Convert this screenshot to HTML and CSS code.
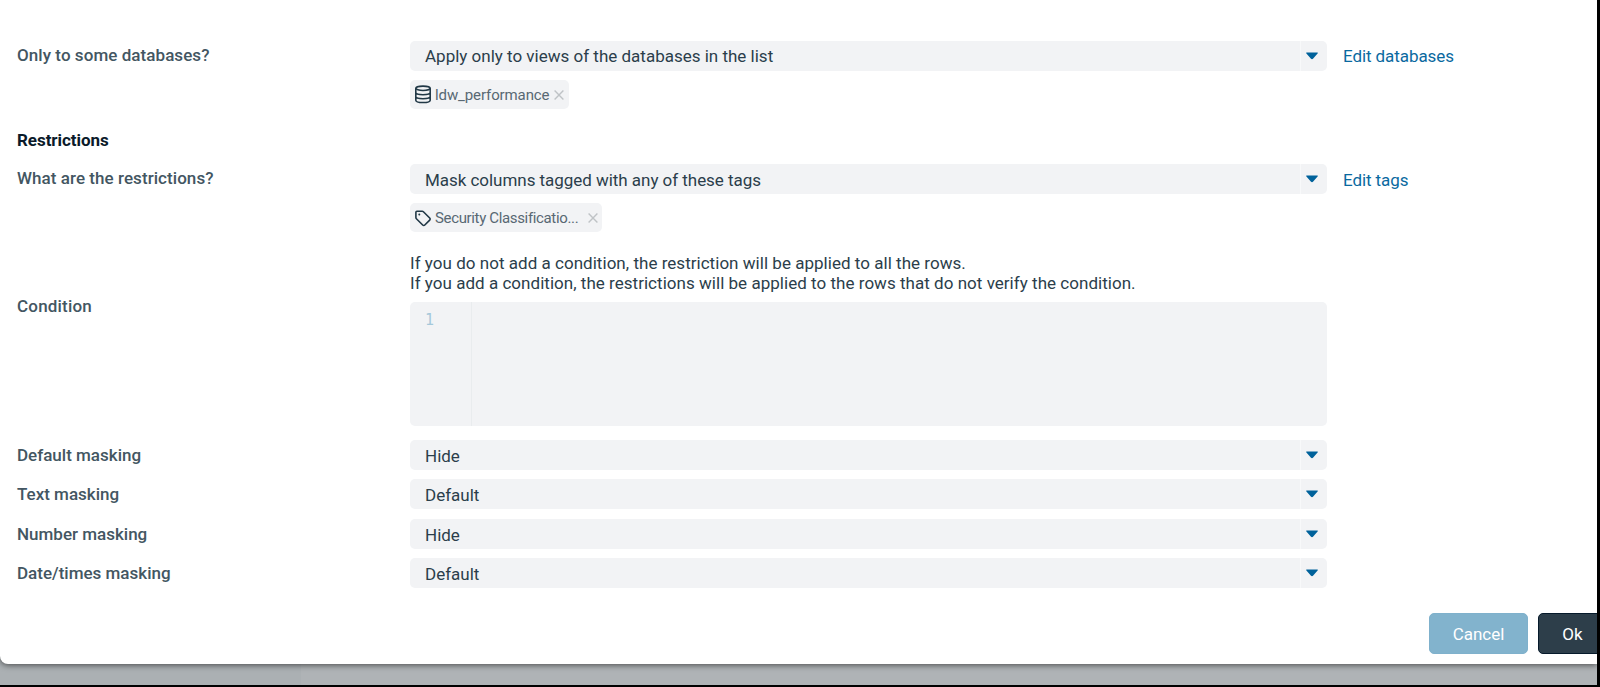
FILE: index.html
```html
<!DOCTYPE html>
<html lang="en">
<head>
  <meta charset="UTF-8" />
  <meta name="viewport" content="width=device-width, initial-scale=1.0"/>
  <title>Edit restriction</title>
  <link rel="stylesheet" href="styles.css">
</head>
<body>

  <div class="page">
    <div class="modal">
      <form class="form">

        <div class="row">
          <label class="label label-question">Only to some databases?</label>
          <div class="select"><span>Apply only to views of the databases in the list</span><i class="arrow"><svg width="12" height="8" viewBox="0 0 12 8"><path d="M.8.4h10.4c.6 0 .8.6.4 1L7 6.7c-.6.6-1.4.6-2 0L.4 1.4C0 1 .2.4.8.4z"/></svg></i></div>
          <a class="link">Edit databases</a>
        </div>

        <div class="chips">
          <div class="chip">
            <svg class="chip-icon" width="17" height="19" viewBox="0 0 17 19">
              <ellipse cx="8" cy="3.300" rx="7.200" ry="2.200"/>
              <path d="M.8 3.300v11.900c0 1.300 3.200 2.300 7.200 2.300s7.200-1 7.200-2.300V3.300M.8 7.600c0 1.300 3.200 2.200 7.200 2.200s7.200-.9 7.200-2.200M.8 11.500c0 1.300 3.200 2.200 7.200 2.200s7.200-.9 7.200-2.200"/>
            </svg>
            <span class="chip-text">ldw_performance</span>
            <svg class="close" width="10" height="10" viewBox="0 0 10 10"><path d="M.6.6l8.800 8.800M9.400.6L.6 9.400"/></svg>
          </div>
        </div>

        <h2 class="heading">Restrictions</h2>

        <div class="row row-restriction">
          <label class="label label-question">What are the restrictions?</label>
          <div class="select"><span>Mask columns tagged with any of these tags</span><i class="arrow"><svg width="12" height="8" viewBox="0 0 12 8"><path d="M.8.4h10.4c.6 0 .8.6.4 1L7 6.7c-.6.6-1.4.6-2 0L.4 1.4C0 1 .2.4.8.4z"/></svg></i></div>
          <a class="link">Edit tags</a>
        </div>

        <div class="chips">
          <div class="chip chip-tag">
            <svg class="chip-icon" width="17" height="17" viewBox="0 0 17 17">
              <path d="M.9 2.200v5.300c0 .5.200.9.500 1.200l6.300 6.300c.6.600 1.500.600 2.100 0l4.900-4.900c.6-.6.600-1.500 0-2.100L8.400 1.700c-.3-.3-.7-.5-1.200-.5H1.900c-.6 0-1 .4-1 1z"/>
              <circle class="dot" cx="4.300" cy="4.600" r="1"/>
            </svg>
            <span class="chip-text">Security Classificatio...</span>
            <svg class="close" width="10" height="10" viewBox="0 0 10 10"><path d="M.6.6l8.800 8.800M9.400.6L.6 9.400"/></svg>
          </div>
        </div>

        <div class="hint">
          <p>If you do not add a condition, the restriction will be applied to all the rows.</p>
          <p>If you add a condition, the restrictions will be applied to the rows that do not verify the condition.</p>
        </div>

        <div class="row row-editor">
          <label class="label">Condition</label>
          <div class="editor"><div class="gutter">1</div></div>
        </div>

        <div class="masks">
          <div class="row">
            <label class="label">Default masking</label>
            <div class="select"><span>Hide</span><i class="arrow"><svg width="12" height="8" viewBox="0 0 12 8"><path d="M.8.4h10.4c.6 0 .8.6.4 1L7 6.7c-.6.6-1.4.6-2 0L.4 1.4C0 1 .2.4.8.4z"/></svg></i></div>
          </div>
          <div class="row">
            <label class="label">Text masking</label>
            <div class="select"><span>Default</span><i class="arrow"><svg width="12" height="8" viewBox="0 0 12 8"><path d="M.8.4h10.4c.6 0 .8.6.4 1L7 6.7c-.6.6-1.4.6-2 0L.4 1.4C0 1 .2.4.8.4z"/></svg></i></div>
          </div>
          <div class="row">
            <label class="label">Number masking</label>
            <div class="select"><span>Hide</span><i class="arrow"><svg width="12" height="8" viewBox="0 0 12 8"><path d="M.8.4h10.4c.6 0 .8.6.4 1L7 6.7c-.6.6-1.4.6-2 0L.4 1.4C0 1 .2.4.8.4z"/></svg></i></div>
          </div>
          <div class="row">
            <label class="label">Date/times masking</label>
            <div class="select"><span>Default</span><i class="arrow"><svg width="12" height="8" viewBox="0 0 12 8"><path d="M.8.4h10.4c.6 0 .8.6.4 1L7 6.7c-.6.6-1.4.6-2 0L.4 1.4C0 1 .2.4.8.4z"/></svg></i></div>
          </div>
        </div>

      </form>

      <div class="footer">
        <button class="btn btn-cancel">Cancel</button>
        <button class="btn btn-ok">Ok</button>
      </div>
    </div>
  </div>

</body>
</html>
```
FILE: styles.css
```css
* {
  box-sizing: border-box;
}

body {
  margin: 0;
  width: 1600px;
  height: 687px;
  overflow: hidden;
  background: #000;
  font-family: Roboto, "Liberation Sans", sans-serif;
  font-size: 17px;
  color: #2b3e4b;
}

.page {
  width: 1597px;
  height: 685px;
  overflow: hidden;
  background: linear-gradient(90deg, #abb0b3 301px, #afb3b6 301px);
}

.modal {
  display: flex;
  flex-direction: column;
  height: 664px;
  padding-top: 41px;
  background: #fff;
  border-bottom-left-radius: 8px;
  box-shadow: 0 1px 6px rgba(0, 0, 0, 0.6);
}

.form {
  padding-left: 17px;
}

.row {
  display: grid;
  grid-template-columns: 393px 917px auto;
  height: 30px;
}

.label {
  line-height: 28px;
  font-weight: 500;
  color: #435662;
}

.label-question {
  letter-spacing: 0.06px;
}

.select {
  display: flex;
  align-items: stretch;
  justify-content: space-between;
  height: 30px;
  padding-left: 15px;
  line-height: 30px;
  background: #f2f3f5;
  border-radius: 5px;
}

.arrow {
  display: flex;
  align-items: center;
  width: 27px;
  padding-left: 5px;
  border-left: 1px solid #f8f9fa;
}

.arrow svg {
  fill: #00629b;
}

.link {
  padding-left: 16px;
  line-height: 30px;
  letter-spacing: -0.08px;
  color: #0a699f;
}

.row-restriction .select,
.row-restriction .link,
.masks .select {
  line-height: 32px;
}

.row-restriction .select {
  letter-spacing: -0.04px;
}

.chips {
  display: flex;
  padding: 9px 0 0 393px;
}

.chip {
  display: flex;
  align-items: center;
  width: 159px;
  height: 29px;
  padding: 0 5px;
  background: #f2f3f5;
  border-radius: 5px;
  font-size: 15px;
  letter-spacing: -0.1px;
  color: #586873;
}

.chip-tag {
  width: 192px;
  padding: 1px 4px 0 5px;
  letter-spacing: -0.35px;
}

.chip-icon {
  flex: none;
  margin-right: 3px;
  fill: none;
  stroke: #213846;
  stroke-width: 1.6;
}

.chip-icon .dot {
  fill: #213846;
  stroke: none;
}

.chip-text {
  white-space: nowrap;
}

.close {
  margin-left: auto;
  fill: none;
  stroke: #bfc3c6;
  stroke-width: 1.4;
}

.heading {
  margin: 20px 0 13px;
  font-size: 17px;
  line-height: 22px;
  font-weight: 700;
  letter-spacing: -0.05px;
  color: #0a1a2a;
}

.hint {
  padding: 21px 0 9px 393px;
  line-height: 20px;
  letter-spacing: 0.03px;
}

.hint p {
  margin: 0;
}

.row-editor {
  height: 124px;
}

.row-editor .label {
  line-height: 9px;
  letter-spacing: 0.2px;
}

.editor {
  background: #f2f3f5;
  border-radius: 5px;
}

.gutter {
  width: 62px;
  height: 124px;
  padding: 8px 0 0 15px;
  border-right: 1px solid #e9ecee;
  font-family: "DejaVu Sans Mono", monospace;
  font-size: 15px;
  line-height: 20px;
  color: #a5c8da;
}

.masks {
  display: grid;
  gap: 9.4px;
  padding-top: 14px;
}

.masks .label {
  line-height: 30px;
}

.footer {
  display: flex;
  gap: 10px;
  margin: auto 0 10px 1429px;
}

.btn {
  flex: none;
  height: 41px;
  border: 1px solid #7fb1cc;
  border-radius: 5px;
  font: inherit;
  color: #fff;
}

.btn-cancel {
  width: 99px;
  background: #82b3cd;
}

.btn-ok {
  width: 69px;
  border-color: #061a2b;
  background: #2d3e4a;
}
```
